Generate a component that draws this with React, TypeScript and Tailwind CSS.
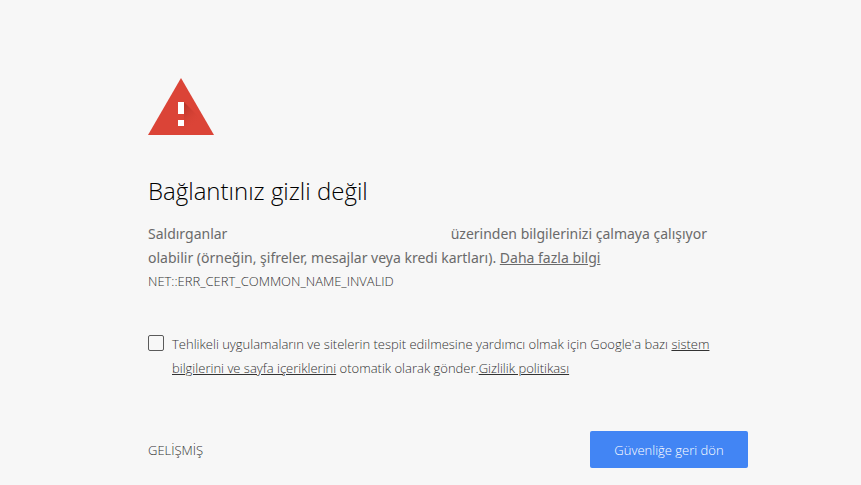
export default function App() {
  return (
    <main className="min-h-screen bg-[#f7f7f7] pt-[78px] pr-6 pb-4 pl-[59px] font-['Open_Sans','Noto_Sans',sans-serif] text-[#333]">
      <div className="mx-auto w-full max-w-[600px]">
        <svg className="block h-[57px] w-[66px]" viewBox="0 0 66 57" role="img" aria-label="Uyarı">
          <defs>
            <linearGradient id="shade" x1="33" y1="30" x2="48" y2="45" gradientUnits="userSpaceOnUse">
              <stop offset="0" stopColor="#a92c22" stopOpacity="0.7" />
              <stop offset="1" stopColor="#db4437" stopOpacity="0" />
            </linearGradient>
          </defs>
          <path d="M33 0 66 57H0Z" fill="#db4437" />
          <path d="M36 24 50 38V57H40L30 47V42H36Z" fill="url(#shade)" />
          <path d="M30 24h6v12h-6zM30 42h6v6h-6z" fill="#fff" />
        </svg>

        <h1 className="mt-10 text-2xl leading-8 font-light text-black">Bağlantınız gizli değil</h1>

        <p className="mt-[15px] font-['Noto_Sans','Open_Sans',sans-serif] text-sm leading-6 text-[#6a6a6a]">
          Saldırganlar <span className="inline-block w-[216px]" /> üzerinden bilgilerinizi çalmaya çalışıyor olabilir
          (örneğin, şifreler, mesajlar veya kredi kartları).{" "}
          <a href="#" className="underline">Daha fazla bilgi</a>
        </p>
        <div className="text-[13px] leading-[22px] font-light">NET::ERR_CERT_COMMON_NAME_INVALID</div>

        <div className="mt-10 flex gap-2 text-[13px] leading-6 font-light">
          <input
            id="report"
            type="checkbox"
            className="mt-[3px] h-4 w-4 shrink-0 appearance-none rounded-xs border border-[#5a5a5a] checked:bg-[#4285f4]"
          />
          <label htmlFor="report">
            Tehlikeli uygulamaların ve sitelerin tespit edilmesine yardımcı olmak için Google'a bazı{" "}
            <a href="#" className="underline">sistem bilgilerini ve sayfa içeriklerini</a> otomatik olarak gönder.
            <a href="#" className="underline">Gizlilik politikası</a>
          </label>
        </div>

        <div className="mt-[51px] flex items-center justify-between text-[13px] leading-5 font-light">
          <button type="button">GELİŞMİŞ</button>
          <button type="button" className="h-[37px] min-w-[158px] rounded-xs bg-[#4285f4] px-5 text-white">
            Güvenliğe geri dön
          </button>
        </div>
      </div>
    </main>
  );
}
